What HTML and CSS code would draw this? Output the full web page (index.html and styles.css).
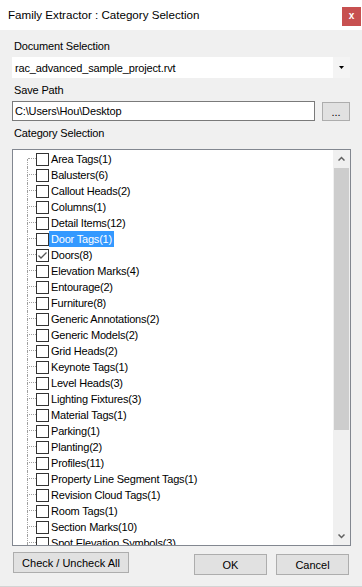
FILE: index.html
```html
<!DOCTYPE html>
<html lang="en">
<head>
    <meta charset="UTF-8">
    <title>Family Extractor : Category Selection</title>
    <link rel="stylesheet" href="styles.css">
</head>
<body>
    <div class="window">
        <div class="titlebar">
            <span class="title">Family Extractor : Category Selection</span>
            <span class="close">x</span>
        </div>

        <div class="content">
            <div class="label first">Document Selection</div>
            <div class="combo">
                <span class="combo-text">rac_advanced_sample_project.rvt</span>
                <span class="combo-btn">
                    <svg width="5" height="3" viewBox="0 0 5 3"><path d="M0 0h5L2.5 3z" fill="#000"/></svg>
                </span>
            </div>

            <div class="label">Save Path</div>
            <div class="path-row">
                <div class="textbox">C:\Users\Hou\Desktop</div>
                <button class="btn browse">...</button>
            </div>

            <div class="label">Category Selection</div>
            <div class="tree">
                <div class="tree-items" id="items"></div>
                <div class="scrollbar">
                    <div class="arrow">
                        <svg width="7" height="5" viewBox="0 0 7 5"><path d="M0.5 4.5L3.5 1.5L6.5 4.5" fill="none" stroke="#606060" stroke-width="1.5"/></svg>
                    </div>
                    <div class="track">
                        <div class="thumb"></div>
                    </div>
                    <div class="arrow">
                        <svg width="7" height="5" viewBox="0 0 7 5"><path d="M0.5 0.5L3.5 3.5L6.5 0.5" fill="none" stroke="#606060" stroke-width="1.5"/></svg>
                    </div>
                </div>
            </div>

            <div class="bottom-row">
                <button class="btn check-all">Check / Uncheck All</button>
                <button class="btn ok">OK</button>
                <button class="btn cancel">Cancel</button>
            </div>
        </div>
    </div>

    <script>
        // список категорій для дерева
        var categories = [
            'Area Tags(1)', 'Balusters(6)', 'Callout Heads(2)', 'Columns(1)',
            'Detail Items(12)', 'Door Tags(1)', 'Doors(8)', 'Elevation Marks(4)',
            'Entourage(2)', 'Furniture(8)', 'Generic Annotations(2)', 'Generic Models(2)',
            'Grid Heads(2)', 'Keynote Tags(1)', 'Level Heads(3)', 'Lighting Fixtures(3)',
            'Material Tags(1)', 'Parking(1)', 'Planting(2)', 'Profiles(11)',
            'Property Line Segment Tags(1)', 'Revision Cloud Tags(1)', 'Room Tags(1)',
            'Section Marks(10)', 'Spot Elevation Symbols(3)'
        ];
        var selected = 'Door Tags(1)';
        var checked = 'Doors(8)';

        var html = '';
        categories.forEach(function (name, i) {
            var check = name === checked
                ? '<svg width="11" height="11" viewBox="0 0 11 11"><path d="M1.5 5.5L4 8L9.5 2.5" fill="none" stroke="#555" stroke-width="1.3"/></svg>'
                : '';
            html += `
                <div class="item${i === 0 ? ' first-item' : ''}">
                    <div class="branch"><div class="branch-top"></div><div class="branch-bottom"></div></div>
                    <span class="box">${check}</span>
                    <span class="name${name === selected ? ' selected' : ''}">${name}</span>
                </div>`;
        });
        document.getElementById('items').innerHTML = html;
    </script>
</body>
</html>
```

FILE: styles.css
```css
body {
    margin: 0;
    font-family: "Liberation Sans", Arial, sans-serif;
    font-size: 11px;
    color: #000;
}
.window {
    width: 362px;
    height: 587px;
    display: flex;
    flex-direction: column;
    overflow: hidden;
}
.titlebar {
    height: 30px;
    background: #fff;
    display: flex;
    justify-content: space-between;
    align-items: flex-start;
    box-sizing: border-box;
}
.title {
    font-family: "Liberation Sans", Arial, sans-serif;
    font-size: 11.6px;
    padding: 7px 0 0 8px;
    line-height: 16px;
    color: #000;
}
.close {
    margin-top: 7px;
    margin-right: 1px;
    width: 19px;
    height: 19px;
    background: #c75050;
    color: #fff;
    font-weight: bold;
    font-size: 10px;
    line-height: 17px;
    text-align: center;
}
.content {
    flex: 1;
    background: #f0f0f0;
    padding: 0 11px 0 12px;
    display: flex;
    flex-direction: column;
    border-bottom: 1px solid #d4d4d4;
}
.label {
    line-height: 14px;
    height: 14px;
    margin-top: 5px;
    padding-left: 2px;
    letter-spacing: -0.15px;
}
.label.first {
    margin-top: 9px;
}
.combo {
    margin-top: 4px;
    height: 21px;
    width: 338px;
    background: #fff;
    display: flex;
    align-items: center;
}
.combo-text {
    flex: 1;
    padding-left: 3px;
    letter-spacing: -0.15px;
}
.combo-btn {
    width: 17px;
    height: 21px;
    background: #f4f4f4;
    display: flex;
    align-items: center;
    justify-content: center;
}
.path-row {
    margin-top: 4px;
    display: flex;
    align-items: flex-start;
}
.textbox {
    width: 303px;
    height: 20px;
    box-sizing: border-box;
    border: 1px solid #7a7a7a;
    background: #fff;
    line-height: 18px;
    padding-left: 2px;
    letter-spacing: -0.15px;
}
.btn {
    font-family: "Liberation Sans", Arial, sans-serif;
    font-size: 11px;
    background: #e1e1e1;
    border: 1px solid #adadad;
    color: #000;
    padding: 0;
    box-sizing: border-box;
}
.browse {
    margin: 1px 0 0 7px;
    width: 28px;
    height: 19px;
    line-height: 14px;
}
.tree {
    margin-top: 9px;
    width: 339px;
    height: 397px;
    box-sizing: border-box;
    border: 1px solid #828790;
    background: #fff;
    display: flex;
}
.tree-items {
    flex: 1;
    padding-top: 1px;
    overflow: hidden;
}
.item {
    height: 16px;
    display: flex;
    align-items: center;
}
.branch {
    margin-left: 14px;
    width: 9px;
    height: 16px;
    display: flex;
    flex-direction: column;
}
.branch-top {
    height: 8px;
    box-sizing: border-box;
    border-left: 1px dotted #a0a0a0;
    border-bottom: 1px dotted #a0a0a0;
}
.first-item .branch-top {
    border-left: none;
    margin-left: 1px;
}
.branch-bottom {
    flex: 1;
    border-left: 1px dotted #a0a0a0;
}
.box {
    width: 13px;
    height: 13px;
    box-sizing: border-box;
    border: 1px solid #333;
    background: #fff;
    display: flex;
    align-items: center;
    justify-content: center;
}
.name {
    margin-left: 0;
    padding: 0 2px;
    line-height: 16px;
    white-space: nowrap;
    letter-spacing: -0.2px;
}
.name.selected {
    background: #3399ff;
    color: #fff;
}
.scrollbar {
    width: 17px;
    background: #f0f0f0;
    display: flex;
    flex-direction: column;
}
.arrow {
    height: 17px;
    display: flex;
    align-items: center;
    justify-content: center;
}
.track {
    flex: 1;
}
.thumb {
    margin: 1px 1px 0 1px;
    height: 262px;
    background: #cdcdcd;
}
.bottom-row {
    display: flex;
    align-items: flex-start;
}
.check-all {
    margin: 6px 0 0 1px;
    width: 116px;
    height: 21px;
}
.ok {
    margin: 8px 0 0 auto;
    width: 73px;
    height: 21px;
}
.cancel {
    margin: 8px 2px 0 9px;
    width: 73px;
    height: 21px;
}
```
